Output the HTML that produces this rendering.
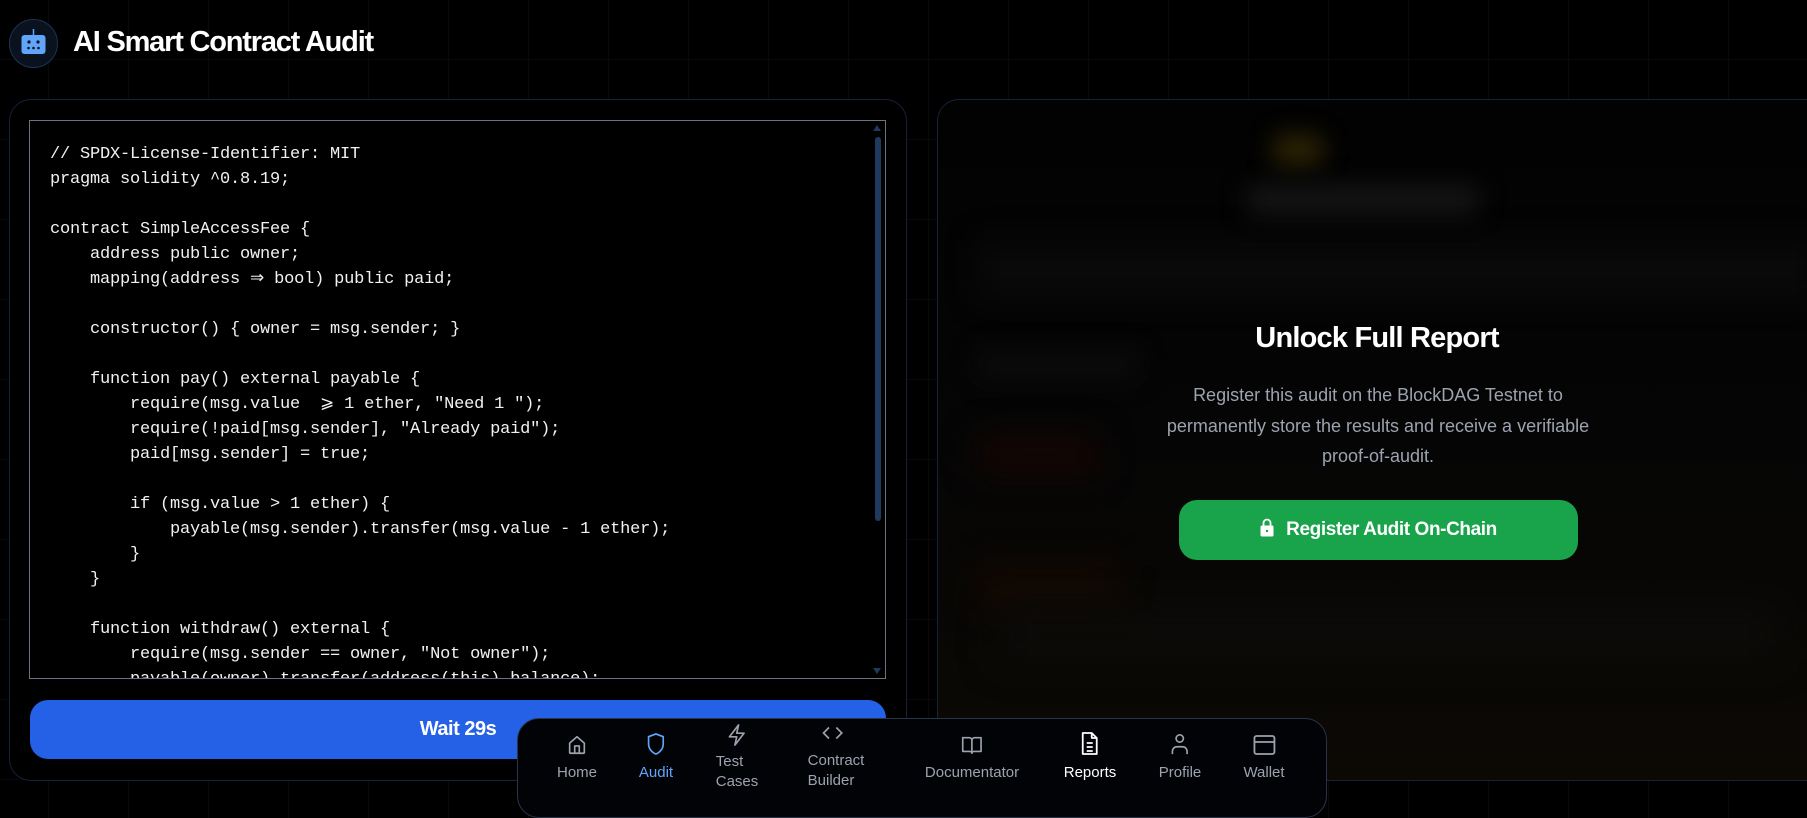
<!DOCTYPE html>
<html><head><meta charset="utf-8"><style>
*{margin:0;padding:0;box-sizing:border-box}
body{width:1807px;height:797px;overflow:hidden;background:#000;position:relative;font-family:"Liberation Sans",sans-serif;
background-image:linear-gradient(to right,#080a10 1px,transparent 1px),linear-gradient(to bottom,#080a10 1px,transparent 1px);
background-size:80px 80px;background-position:48px 59px;}
.abs{position:absolute}
.title{left:73px;top:26px;font-size:29px;font-weight:bold;color:#fff;letter-spacing:-1.2px}
.card{border:1px solid #18213a;border-radius:22px;background:#000}
pre{font-family:"Liberation Mono",monospace;white-space:pre;color:#f1f1f1}
.nav{left:517px;top:718px;width:810px;height:100px;background:#020306;border:1px solid #2a3448;border-radius:22px}
.it{position:absolute;text-align:center;font-size:15px;color:#9ca3af;line-height:20px;transform:translateX(-50%)}
.it svg{display:block;margin:0 auto}
</style></head><body>
<div class="abs" style="left:9px;top:19px;width:49px;height:49px;border-radius:50%;background:#0a1220;border:1px solid #1d3350"></div>
<svg class="abs" style="left:9px;top:19px" width="49" height="49" viewBox="0 0 49 49">
<line x1="24.5" y1="10" x2="24.5" y2="17" stroke="#60a5fa" stroke-width="1.5"/>
<rect x="12.5" y="16" width="24" height="19" rx="3" fill="#60a5fa"/>
<circle cx="20" cy="23" r="1.6" fill="#0a1220"/><circle cx="29" cy="23" r="1.6" fill="#0a1220"/>
<circle cx="19.5" cy="29" r="1.3" fill="#0a1220"/><circle cx="24.5" cy="29" r="1.3" fill="#0a1220"/><circle cx="29.5" cy="29" r="1.3" fill="#0a1220"/>
</svg>
<div class="abs title">AI Smart Contract Audit</div>

<div class="abs card" style="left:9px;top:99px;width:898px;height:682px"></div>
<div class="abs" style="left:29px;top:120px;width:857px;height:559px;border:1px solid #6b7280;background:#000;overflow:hidden">
<pre style="position:absolute;left:20px;top:21px;font-size:17px;line-height:25px;letter-spacing:-0.2px">// SPDX-License-Identifier: MIT
pragma solidity ^0.8.19;

contract SimpleAccessFee {
    address public owner;
    mapping(address ⇒ bool) public paid;

    constructor() { owner = msg.sender; }

    function pay() external payable {
        require(msg.value  ⩾ 1 ether, "Need 1 ");
        require(!paid[msg.sender], "Already paid");
        paid[msg.sender] = true;

        if (msg.value > 1 ether) {
            payable(msg.sender).transfer(msg.value - 1 ether);
        }
    }

    function withdraw() external {
        require(msg.sender == owner, "Not owner");
        payable(owner).transfer(address(this).balance);
    }
}</pre>
<div class="abs" style="right:4px;top:16px;width:6px;height:384px;border-radius:3px;background:#1e3a5f"></div>
<div class="abs" style="right:4px;top:4px;width:0;height:0;border-left:4px solid transparent;border-right:4px solid transparent;border-bottom:6px solid #1e3a5f"></div>
<div class="abs" style="right:4px;bottom:4px;width:0;height:0;border-left:4px solid transparent;border-right:4px solid transparent;border-top:6px solid #1e3a5f"></div>
</div>
<div class="abs" style="left:30px;top:700px;width:856px;height:59px;border-radius:18px;background:#2461e6;color:#fff;font-weight:bold;font-size:20px;text-align:center;line-height:59px;letter-spacing:-0.5px">Wait 29s</div>

<div class="abs card" style="left:937px;top:99px;width:900px;height:682px;overflow:hidden;background:linear-gradient(to bottom,#020202 0%,#050505 50%,#0c0905 100%)">
<div class="abs" style="left:335px;top:35px;width:50px;height:30px;background:#2e2404;filter:blur(12px);border-radius:10px"></div>
<div class="abs" style="left:310px;top:85px;width:230px;height:30px;background:#151515;filter:blur(12px)"></div>
<div class="abs" style="left:40px;top:140px;width:840px;height:60px;background:#090909;filter:blur(14px)"></div>
<div class="abs" style="left:40px;top:250px;width:160px;height:30px;background:#0b0b0b;filter:blur(12px)"></div>
<div class="abs" style="left:40px;top:335px;width:120px;height:40px;background:#140604;filter:blur(16px)"></div>
<div class="abs" style="left:40px;top:465px;width:140px;height:40px;background:#140903;filter:blur(16px)"></div>
<div class="abs" style="left:60px;top:510px;width:780px;height:50px;background:#0c0b09;filter:blur(18px)"></div>
</div>
<div class="abs" style="left:937px;top:322px;width:880px;text-align:center;color:#fff;font-weight:bold;font-size:29px;letter-spacing:-0.8px">Unlock Full Report</div>
<div class="abs" style="left:1158px;top:380px;width:440px;text-align:center;color:#9ca3af;font-size:18px;line-height:30.5px">Register this audit on the BlockDAG Testnet to permanently store the results and receive a verifiable proof-of-audit.</div>
<div class="abs" style="left:1179px;top:500px;width:399px;height:60px;border-radius:18px;background:#19a34a;color:#fff;font-weight:bold;font-size:19px;line-height:60px;text-align:center;letter-spacing:-0.4px">
<svg width="14" height="19" viewBox="0 0 14 19" style="vertical-align:-2px;margin-right:12px"><path d="M3.5 8V5a3.5 3.5 0 0 1 7 0v3" fill="none" stroke="#fff" stroke-width="1.8"/><rect x="0.5" y="7.5" width="13" height="11" rx="1.5" fill="#fff"/><circle cx="7" cy="13" r="1.2" fill="#19a34a"/></svg>Register Audit On-Chain</div>

<div class="abs nav"></div>
<div class="it" style="left:577px;top:733px"><svg width="22" height="24" viewBox="0 0 24 24" fill="none" stroke="#9ca3af" stroke-width="1.8" stroke-linejoin="round"><path d="M4 10l8-7 8 7v10a1 1 0 0 1-1 1H5a1 1 0 0 1-1-1z"/><path d="M9.5 21v-8h5v8"/></svg><div style="margin-top:6px">Home</div></div>
<div class="it" style="left:656px;top:731px;color:#60a5fa"><svg width="22" height="26" viewBox="0 0 24 26" fill="none" stroke="#60a5fa" stroke-width="1.8" stroke-linejoin="round"><path d="M12 2l8 3v8c0 5-3.5 9-8 11-4.5-2-8-6-8-11V5z"/></svg><div style="margin-top:6px">Audit</div></div>
<div class="it" style="left:737px;top:722px;text-align:left"><svg width="22" height="26" viewBox="0 0 24 26" fill="none" stroke="#9ca3af" stroke-width="1.8" stroke-linejoin="round"><path d="M14 2L4 15h8l-2 9 10-13h-8z"/></svg><div style="margin-top:4px">Test<br>Cases</div></div>
<div class="it" style="left:836px;top:724px;text-align:left"><svg width="22" height="18" viewBox="0 0 24 18" fill="none" stroke="#9ca3af" stroke-width="1.8" style="margin-left:14px"><path d="M8 3L2 9l6 6M16 3l6 6-6 6"/></svg><div style="margin-top:9px">Contract<br>Builder</div></div>
<div class="it" style="left:972px;top:733px"><svg width="22" height="24" viewBox="0 0 24 24" fill="none" stroke="#9ca3af" stroke-width="1.8" stroke-linejoin="round"><path d="M2 4h7a3 3 0 0 1 3 3v14a2 2 0 0 0-2-2H2zM22 4h-7a3 3 0 0 0-3 3v14a2 2 0 0 1 2-2h8z"/></svg><div style="margin-top:6px">Documentator</div></div>
<div class="it" style="left:1090px;top:731px;color:#fff"><svg width="20" height="26" viewBox="0 0 20 26" fill="none" stroke="#fff" stroke-width="1.8" stroke-linejoin="round"><path d="M3 2h9l5 5v16H3z"/><path d="M12 2v5h5M7 12h6M7 16h6M7 20h6"/></svg><div style="margin-top:6px">Reports</div></div>
<div class="it" style="left:1180px;top:731px"><svg width="22" height="26" viewBox="0 0 24 26" fill="none" stroke="#9ca3af" stroke-width="1.8"><circle cx="12" cy="7" r="4"/><path d="M4 24v-3a5 5 0 0 1 5-5h6a5 5 0 0 1 5 5v3"/></svg><div style="margin-top:6px">Profile</div></div>
<div class="it" style="left:1264px;top:733px"><svg width="24" height="24" viewBox="0 0 24 24" fill="none" stroke="#9ca3af" stroke-width="1.8"><rect x="2" y="3" width="20" height="18" rx="2"/><path d="M2 9h20"/></svg><div style="margin-top:6px">Wallet</div></div>
</body></html>
